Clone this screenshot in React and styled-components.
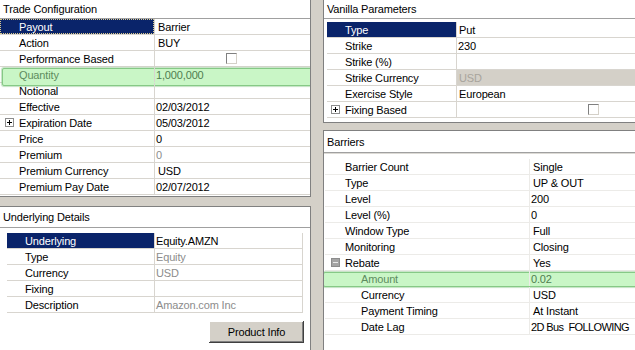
import React from 'react'
import styled, { createGlobalStyle, css } from 'styled-components'

const GlobalStyle = createGlobalStyle`
  html, body {
    margin: 0;
    padding: 0;
    background: #d4d0c8;
    overflow: hidden;
  }
  body {
    font-family: "Liberation Sans", Arial, sans-serif;
    font-size: 11px;
    color: #000;
  }
`

const trade = [
  { label: 'Payout', value: 'Barrier', selected: true, focus: true, pad: 3 },
  { label: 'Action', value: 'BUY', pad: 3 },
  { label: 'Performance Based', check: 71 },
  { label: 'Quantity', value: '1,000,000', hl: { top: 1, right: -3, bottom: -4, left: 2 } },
  { label: 'Notional' },
  { label: 'Effective', value: '02/03/2012' },
  { label: 'Expiration Date', value: '05/03/2012', expander: 'closed' },
  { label: 'Price', value: '0' },
  { label: 'Premium', value: '0', muted: true },
  { label: 'Premium Currency', value: 'USD', pad: 3 },
  { label: 'Premium Pay Date', value: '02/07/2012' },
]

const underlying = [
  { label: 'Underlying', value: 'Equity.AMZN', selected: true },
  { label: 'Type', value: 'Equity', muted: true },
  { label: 'Currency', value: 'USD', muted: true },
  { label: 'Fixing' },
  { label: 'Description', value: 'Amazon.com Inc', muted: true },
]

const vanilla = [
  { label: 'Type', value: 'Put', selected: true, pad: 2 },
  { label: 'Strike', value: '230' },
  { label: 'Strike (%)' },
  { label: 'Strike Currency', value: 'USD', muted: true, shaded: true, pad: 2 },
  { label: 'Exercise Style', value: 'European', pad: 2 },
  { label: 'Fixing Based', check: 131, expander: 'closed' },
]

const barriers = [
  { label: 'Barrier Count', value: 'Single', pad: 3 },
  { label: 'Type', value: 'UP & OUT', pad: 3 },
  { label: 'Level', value: '200' },
  { label: 'Level (%)', value: '0' },
  { label: 'Window Type', value: 'Full', pad: 3 },
  { label: 'Monitoring', value: 'Closing', pad: 3 },
  { label: 'Rebate', value: 'Yes', pad: 3, expander: 'open' },
  { label: 'Amount', value: '0.02', indent: 16, hl: { top: 1, right: -6, bottom: -1, left: -2 } },
  { label: 'Currency', value: 'USD', indent: 16, pad: 3 },
  { label: 'Payment Timing', value: 'At Instant', indent: 16, pad: 3 },
  { label: 'Date Lag', value: '2D Bus  FOLLOWING', indent: 16, tight: true },
]

const PropertyGrid = ({ rows, labelWidth, labelPad, line, ...rest }) => (
  <Grid {...rest}>
    {rows.map((r) => (
      <Row key={r.label} $line={line} $hl={r.hl}>
        <Label
          $w={labelWidth}
          $pad={labelPad + (r.indent || 0) - (r.expander ? 14 : 0)}
          $selected={r.selected}
          $focus={r.focus}
          $hl={!!r.hl}
        >
          {r.expander && <Expander $open={r.expander === 'open'} />}
          {r.label}
        </Label>
        <Value
          $line={line}
          $pad={r.pad || 1}
          $muted={r.muted}
          $shaded={r.shaded}
          $hl={!!r.hl}
          $tight={r.tight}
        >
          {r.check !== undefined ? <Check $at={r.check} /> : r.value}
        </Value>
      </Row>
    ))}
  </Grid>
)

const App = () => (
  <>
    <GlobalStyle />
    <Layout>
      <Column $w={312} $gap={9}>
        <Panel $h={198}>
          <PanelTitle $h={19}>Trade Configuration</PanelTitle>
          <PropertyGrid rows={trade} labelWidth={154} labelPad={19} line='#d8d5cf' />
        </Panel>
        <Panel>
          <PanelTitle $h={21}>Underlying Details</PanelTitle>
          <PropertyGrid
            rows={underlying}
            labelWidth={147}
            labelPad={18}
            line='#d8d5cf'
            $top={5}
            $left={7}
            $width={296}
            $edge
          />
          <ButtonBar>
            <Button>Product Info</Button>
          </ButtonBar>
        </Panel>
      </Column>
      <Splitter />
      <Column $gap={7}>
        <Panel $h={124}>
          <PanelTitle $h={19}>Vanilla Parameters</PanelTitle>
          <PropertyGrid rows={vanilla} labelWidth={129} labelPad={18} line='#d8d5cf' $top={3} $left={3} />
        </Panel>
        <Panel>
          <PanelTitle $h={22} $double>Barriers</PanelTitle>
          <PropertyGrid rows={barriers} labelWidth={204} labelPad={20} line='#ecebe8' $top={6} $left={1} />
        </Panel>
      </Column>
    </Layout>
  </>
)

const Layout = styled.div`
  display: flex;
  margin: -1px;
  width: 638px;
  height: 352px;
  background: #d4d0c8;
  letter-spacing: -0.15px;
`

const Column = styled.div`
  display: flex;
  flex-direction: column;
  gap: ${(p) => p.$gap}px;
  width: ${(p) => (p.$w ? `${p.$w}px` : 'auto')};
  flex: ${(p) => (p.$w ? 'none' : 1)};
`

const Splitter = styled.div`
  width: 12px;
  flex: none;
  background: #d4d0c8;
`

const Panel = styled.section`
  background: #fff;
  border: 1px solid #808080;
  box-sizing: border-box;
  height: ${(p) => (p.$h ? `${p.$h}px` : 'auto')};
  flex: ${(p) => (p.$h ? 'none' : 1)};
  overflow: hidden;
`

const PanelTitle = styled.div`
  height: ${(p) => p.$h}px;
  box-sizing: border-box;
  display: flex;
  align-items: center;
  padding-left: 3px;
  border-bottom: 1px solid #a0a0a0;
  ${(p) => p.$double && 'box-shadow: 0 1px 0 #dcdad5;'}
`

const Grid = styled.div`
  margin-top: ${(p) => p.$top || 0}px;
  margin-left: ${(p) => p.$left || 0}px;
  width: ${(p) => (p.$width ? `${p.$width}px` : 'auto')};
  box-sizing: border-box;
  border-right: ${(p) => (p.$edge ? '1px solid #d8d5cf' : 'none')};
`

const Row = styled.div`
  position: relative;
  display: flex;
  height: 16px;
  box-sizing: border-box;
  border-bottom: 1px solid ${(p) => p.$line};

  ${(p) =>
    p.$hl &&
    css`
      &::before {
        content: '';
        position: absolute;
        z-index: 0;
        top: ${p.$hl.top}px;
        right: ${p.$hl.right}px;
        bottom: ${p.$hl.bottom}px;
        left: ${p.$hl.left}px;
        background: #c9f6c6;
        border: 1px solid #86c986;
        border-radius: 2px;
        box-shadow: 0 0 1px 1px rgba(120, 190, 120, 0.45);
      }
    `}
`

const Label = styled.div`
  position: relative;
  z-index: 1;
  width: ${(p) => p.$w}px;
  flex: none;
  box-sizing: border-box;
  display: flex;
  align-items: center;
  padding-left: ${(p) => p.$pad}px;
  white-space: nowrap;
  background: ${(p) => (p.$selected ? '#0a246a' : 'transparent')};
  color: ${(p) => (p.$selected ? '#fff' : p.$hl ? '#5e8c5e' : '#000')};
  outline: ${(p) => (p.$focus ? '1px dotted #d9c98c' : 'none')};
  outline-offset: -1px;
`

const Value = styled.div`
  position: relative;
  z-index: 1;
  flex: 1;
  display: flex;
  align-items: center;
  padding-left: ${(p) => p.$pad}px;
  white-space: pre;
  letter-spacing: ${(p) => (p.$tight ? '-0.6px' : 'inherit')};
  border-left: 1px solid ${(p) => p.$line};
  background: ${(p) => (p.$shaded ? '#d4d0c8' : 'transparent')};
  color: ${(p) => (p.$hl ? '#4f7d4f' : p.$shaded ? '#a8a49c' : p.$muted ? '#8c8c8c' : '#000')};
`

const Check = styled.span`
  width: 11px;
  height: 11px;
  margin-left: ${(p) => p.$at - 1}px;
  box-sizing: border-box;
  background: #fff;
  border-top: 1px solid #808080;
  border-left: 1px solid #808080;
  border-right: 1px solid #d4d0c8;
  border-bottom: 1px solid #d4d0c8;
`

const Expander = styled.span`
  position: relative;
  width: 9px;
  height: 9px;
  flex: none;
  margin-right: 5px;
  box-sizing: border-box;
  border: 1px solid #8c8c8c;
  background: ${(p) => (p.$open ? '#a4a4a4' : '#fff')};

  &::before {
    content: '';
    position: absolute;
    top: 3px;
    left: 1px;
    right: 1px;
    height: 1px;
    background: ${(p) => (p.$open ? '#e8e8e8' : '#000')};
  }
  &::after {
    content: ${(p) => (p.$open ? 'none' : "''")};
    position: absolute;
    left: 3px;
    top: 1px;
    bottom: 1px;
    width: 1px;
    background: #000;
  }
`

const ButtonBar = styled.div`
  display: flex;
  justify-content: flex-end;
  margin-top: 8px;
  padding-right: 6px;
`

const Button = styled.button`
  width: 95px;
  height: 22px;
  padding: 0;
  font-family: inherit;
  font-size: 11px;
  letter-spacing: inherit;
  color: #000;
  background: #d4d0c8;
  border: none;
  box-shadow: inset -1px -1px #404040, inset 1px 1px #ffffff, inset -2px -2px #808080;
`

export default App
